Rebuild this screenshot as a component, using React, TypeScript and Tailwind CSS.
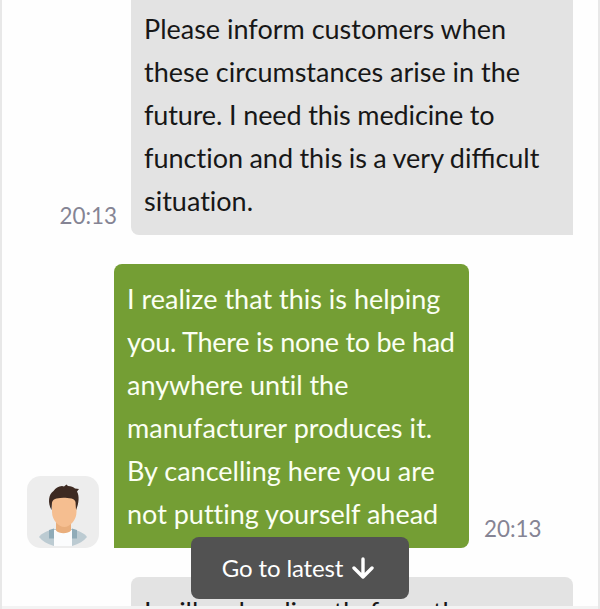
import type { ReactNode } from "react";

function Line({ children, className = "" }: { children: ReactNode; className?: string }) {
  return <p className={`whitespace-nowrap ${className}`}>{children}</p>;
}

function Time() {
  return <span className="block pb-[5px] text-[22.4px] leading-7 text-[#858494]">20:13</span>;
}

function Avatar() {
  return (
    <svg viewBox="0 0 72 72" className="h-18 w-18 shrink-0 rounded-[14px] bg-[#ededed]">
      <path d="M12 61c3-4 8-6 15-8h18c7 2 12 4 15 8-3 4-8 7-15 9H27c-7-2-12-5-15-9Z" fill="#bccbd2" />
      <path d="M27 54h18v16H27Z" fill="#fbfcfd" />
      <path d="m22 54 5-1.500v10h-5Zm23-1.500 5 1.500v8.500h-5Z" fill="#8fabb8" />
      <path d="M29 44h15v10.500c-3 3.500-12 3.500-15 0Z" fill="#e9ae7c" />
      <path d="M25 24c0-6 24.500-6 24.500 0v12c0 8-6.500 15-12.250 15S25 44 25 36Z" fill="#f5be90" />
      <path d="M24.500 34c-4-7-3-16 2-19 2-3 5-4.500 8.500-5l2 .5 2.500-2 1.500 1.500c3 0 5.500 1 7 2.500l4 .5-2 2.500c2.500 4 2 12-1 18.500l-.5-8c-.5-2-2-3-4-3.500-6-1-10-1-15 0-2 .5-4 1.500-4.500 4Z" fill="#3d2a22" />
    </svg>
  );
}

export default function App() {
  return (
    <div className="relative flex h-[609px] w-[600px] flex-col overflow-hidden border-x-2 border-[#e8e8e8] bg-[#fefefe] font-['Lato',sans-serif] text-[27px] leading-[43px] text-[#171717] [font-variant-ligatures:none]">
      <div className="flex h-[235px] shrink-0 items-end justify-end pr-[25px]">
        <div className="mr-[14px]">
          <Time />
        </div>
        <div className="flex h-full w-[442px] flex-col justify-end rounded-bl-lg bg-[#e3e3e3] px-[13px] pb-[13px]">
          <Line>Please inform customers when</Line>
          <Line>these circumstances arise in the</Line>
          <Line className="tracking-[-0.13px]">future. I need this medicine to</Line>
          <Line className="[word-spacing:-0.5px]">
            function and this is a very di<span className="[font-variant-ligatures:normal]">ffi</span>cult
          </Line>
          <Line>situation.</Line>
        </div>
      </div>

      <div className="mt-[29px] flex shrink-0 items-end pl-[25px]">
        <Avatar />
        <div className="ml-[15px] w-[355px] rounded-t-lg rounded-br-lg bg-[#749e34] px-[13px] py-[13px] text-[#fbfff3]">
          <Line>I realize that this is helping</Line>
          <Line className="tracking-[-0.27px]">you. There is none to be had</Line>
          <Line>anywhere until the</Line>
          <Line className="tracking-[0.06px]">manufacturer produces it.</Line>
          <Line>By cancelling here you are</Line>
          <Line>not putting yourself ahead</Line>
        </div>
        <div className="ml-[15px]">
          <Time />
        </div>
      </div>

      <div className="mt-[29px] mr-[25px] ml-auto h-[29px] w-[442px] shrink-0 overflow-hidden rounded-t-lg bg-[#e3e3e3] px-[13px] pt-[13px]">
        <Line>I will order directly from the</Line>
      </div>
      <div className="grow bg-[#f3f3f3]" />

      <button className="absolute top-[537px] left-[189px] flex h-[62px] w-[218px] items-center justify-center gap-[9px] rounded-lg bg-[#525252] pr-1 pb-px text-[24px] text-white">
        <span className="pb-px tracking-[-0.15px]">Go to latest</span>
        <svg viewBox="0 0 22 22" className="h-[22px] w-[22px]" fill="none" stroke="currentColor" strokeWidth="3.4" strokeLinecap="round" strokeLinejoin="round">
          <path d="M11 2v18M2 11l9 9 9-9" />
        </svg>
      </button>
    </div>
  );
}
